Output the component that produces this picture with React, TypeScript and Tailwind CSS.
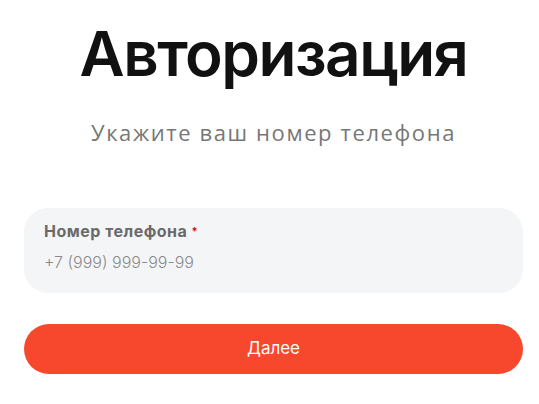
export default function App() {
  return (
    <div className="h-screen overflow-hidden bg-white pl-6 pr-4 font-['Inter',sans-serif]">
      <h1 className="pt-[22px] text-center text-[62px] font-semibold leading-[64px] tracking-[-1.5px] text-[#111]">
        Авторизация
      </h1>
      <p className="mt-[33px] text-center font-['Open_Sans',sans-serif] text-[22px] leading-[26px] tracking-[1.6px] text-[#777]">
        Укажите ваш номер телефона
      </p>
      <form className="mt-[63px] flex flex-col" onSubmit={(e) => e.preventDefault()}>
        <label className="flex h-[85px] flex-col rounded-[24px] bg-[#f4f5f7] px-5 pt-[13px]">
          <span className="text-[16px] font-bold leading-[20px] tracking-[0.5px] text-[#6a6a6a]">
            Номер телефона <span className="align-top text-[11px] text-[#d0101b]">*</span>
          </span>
          <input
            type="tel"
            placeholder="+7 (999) 999-99-99"
            className="mt-[11px] bg-transparent text-[16px] font-light leading-[20px] text-[#555] outline-none placeholder:text-[#8a8a8a]"
          />
        </label>
        <button
          type="submit"
          className="mt-[31px] h-[50px] rounded-full bg-[#f7472d] text-[17px] text-white"
        >
          Далее
        </button>
      </form>
    </div>
  );
}
